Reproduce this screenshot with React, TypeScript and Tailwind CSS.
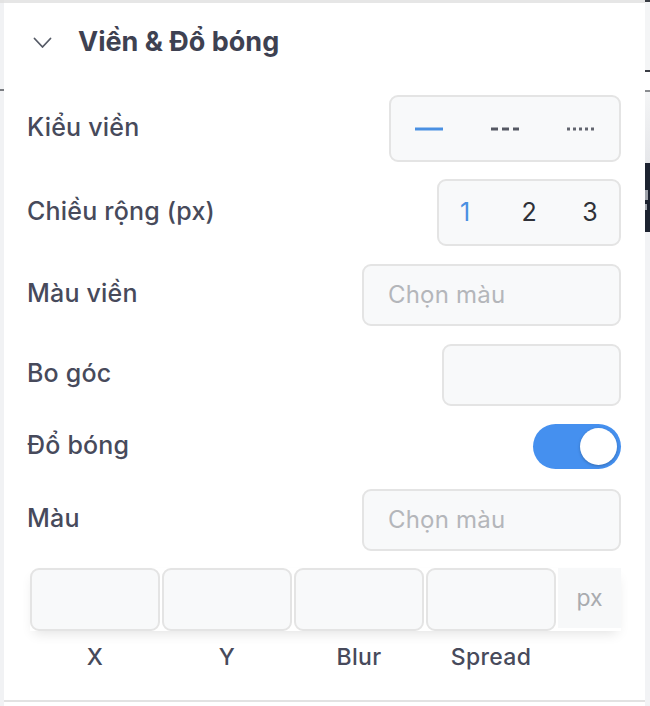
import React from "react";

const labelCls = "pb-[4px] text-[25px] font-medium leading-[28px] tracking-[0.2px] text-[#474a5b]";
const boxCls = "rounded-[9px] border-2 border-[#e4e4e4] bg-[#f8f9fa]";

function Row({ label, className, children }: { label: string; className: string; children: React.ReactNode }) {
  return (
    <div className={`flex items-center justify-between ${className}`}>
      <span className={labelCls}>{label}</span>
      {children}
    </div>
  );
}

function ColorInput() {
  return (
    <div className={`${boxCls} flex h-[62px] w-[259px] items-center pl-[24px]`}>
      <span className="text-[24px] leading-none tracking-[0.2px] text-[#b4b6ba]">Chọn màu</span>
    </div>
  );
}

export default function App() {
  const shadowFields = ["X", "Y", "Blur", "Spread"];

  return (
    <div className="flex h-[706px] w-[650px] bg-white font-['Inter',sans-serif]">
      {/* left edge of the page behind */}
      <div className="flex w-[4px] flex-col bg-[#f1f2f4]">
        <div className="h-[3px] bg-[#e3e3e3]" />
        <div className="h-[86px]" />
        <div className="h-[2px] bg-[#7b7d82]" />
      </div>

      {/* panel */}
      <div className="flex flex-1 flex-col border-t-[3px] border-[#e6e6e6]">
        <div className="flex h-[77px] items-center pl-[29px]">
          <svg width="19" height="12" viewBox="0 0 19 12" fill="none" className="mt-[2px]">
            <path d="M1.5 1.5 L9.5 10 L17.5 1.5" stroke="#555a66" strokeWidth="1.8" strokeLinecap="round" strokeLinejoin="round" />
          </svg>
          <span className="ml-[26px] text-[27px] font-bold leading-none text-[#3e4151]">Viền &amp; Đổ bóng</span>
        </div>

        <div className="flex flex-col pl-[23px] pr-[24px]">
          <Row label="Kiểu viền" className="mt-[15px]">
            <div className={`${boxCls} grid h-[67px] w-[232px] grid-cols-3 items-center`}>
              <div className="flex justify-center">
                <svg width="30" height="4"><line x1="1" y1="2" x2="29" y2="2" stroke="#4a90e2" strokeWidth="3" /></svg>
              </div>
              <div className="flex justify-center">
                <svg width="30" height="4"><line x1="1" y1="2" x2="29" y2="2" stroke="#555863" strokeWidth="3" strokeDasharray="7 4" /></svg>
              </div>
              <div className="flex justify-center">
                <svg width="30" height="4"><line x1="1" y1="2" x2="29" y2="2" stroke="#62656f" strokeWidth="3" strokeDasharray="3 3" /></svg>
              </div>
            </div>
          </Row>

          <Row label="Chiều rộng (px)" className="mt-[17px]">
            <div className={`${boxCls} grid h-[67px] w-[184px] grid-cols-3 items-center text-center text-[25px] leading-none`}>
              <span className="pr-[8px] text-[#4a90e2]">1</span>
              <span className="text-[#2f3138]">2</span>
              <span className="pl-[2px] text-[#2f3138]">3</span>
            </div>
          </Row>

          <Row label="Màu viền" className="mt-[18px]">
            <ColorInput />
          </Row>

          <Row label="Bo góc" className="mt-[18px]">
            <div className={`${boxCls} h-[62px] w-[179px]`} />
          </Row>

          <Row label="Đổ bóng" className="mt-[18px]">
            <div className="flex h-[45px] w-[88px] items-center justify-end rounded-full bg-[#4590ef] pr-[4px]">
              <div className="h-[37px] w-[37px] rounded-full bg-white shadow-[0_1px_3px_rgba(0,0,0,0.25)]" />
            </div>
          </Row>

          <Row label="Màu" className="mt-[20px]">
            <ColorInput />
          </Row>

          <div className="ml-[3px] mt-[17px] flex items-start shadow-[0_6px_12px_-4px_rgba(0,0,0,0.12)]">
            {shadowFields.map((f) => (
              <div key={f} className={`${boxCls} mr-[2px] h-[63px] w-[130px] last:mr-0`} />
            ))}
            <div className="flex h-[60px] flex-1 items-center justify-center bg-[#f7f8f9]">
              <span className="text-[23px] leading-none text-[#a9abaf]">px</span>
            </div>
          </div>

          <div className="ml-[3px] mt-[14px] flex">
            {shadowFields.map((f) => (
              <span key={f} className="mr-[2px] w-[130px] text-center text-[23px] font-medium leading-[24px] tracking-[0.3px] text-[#474a5b]">
                {f}
              </span>
            ))}
          </div>
        </div>

        <div className="mt-auto mb-[4px] h-[2px] bg-[#e2e2e2]" />
      </div>

      {/* right edge of the page behind */}
      <div className="flex w-[5px] flex-col bg-[#f2f3f5]">
        <div className="h-[2px] bg-[#3a3d44]" />
        <div className="h-[68px] bg-[#f4f5f6]" />
        <div className="h-[2px] bg-[#3b3e45]" />
        <div className="h-[18px] bg-white" />
        <div className="h-[2px] bg-[#8a8c90]" />
        <div className="h-[71px] bg-gradient-to-b from-[#f4f5f6] to-[#e6e7ea]" />
        <div className="flex h-[69px] flex-col bg-[#1d2330]">
          <div className="h-[27px]" />
          <div className="h-[10px] w-[3px] bg-[#9ea2aa]" />
          <div className="h-[4px]" />
          <div className="h-[6px] w-[2px] bg-[#9ea2aa]" />
        </div>
        <div className="flex-1 bg-[#f2f3f5]" />
      </div>
    </div>
  );
}
